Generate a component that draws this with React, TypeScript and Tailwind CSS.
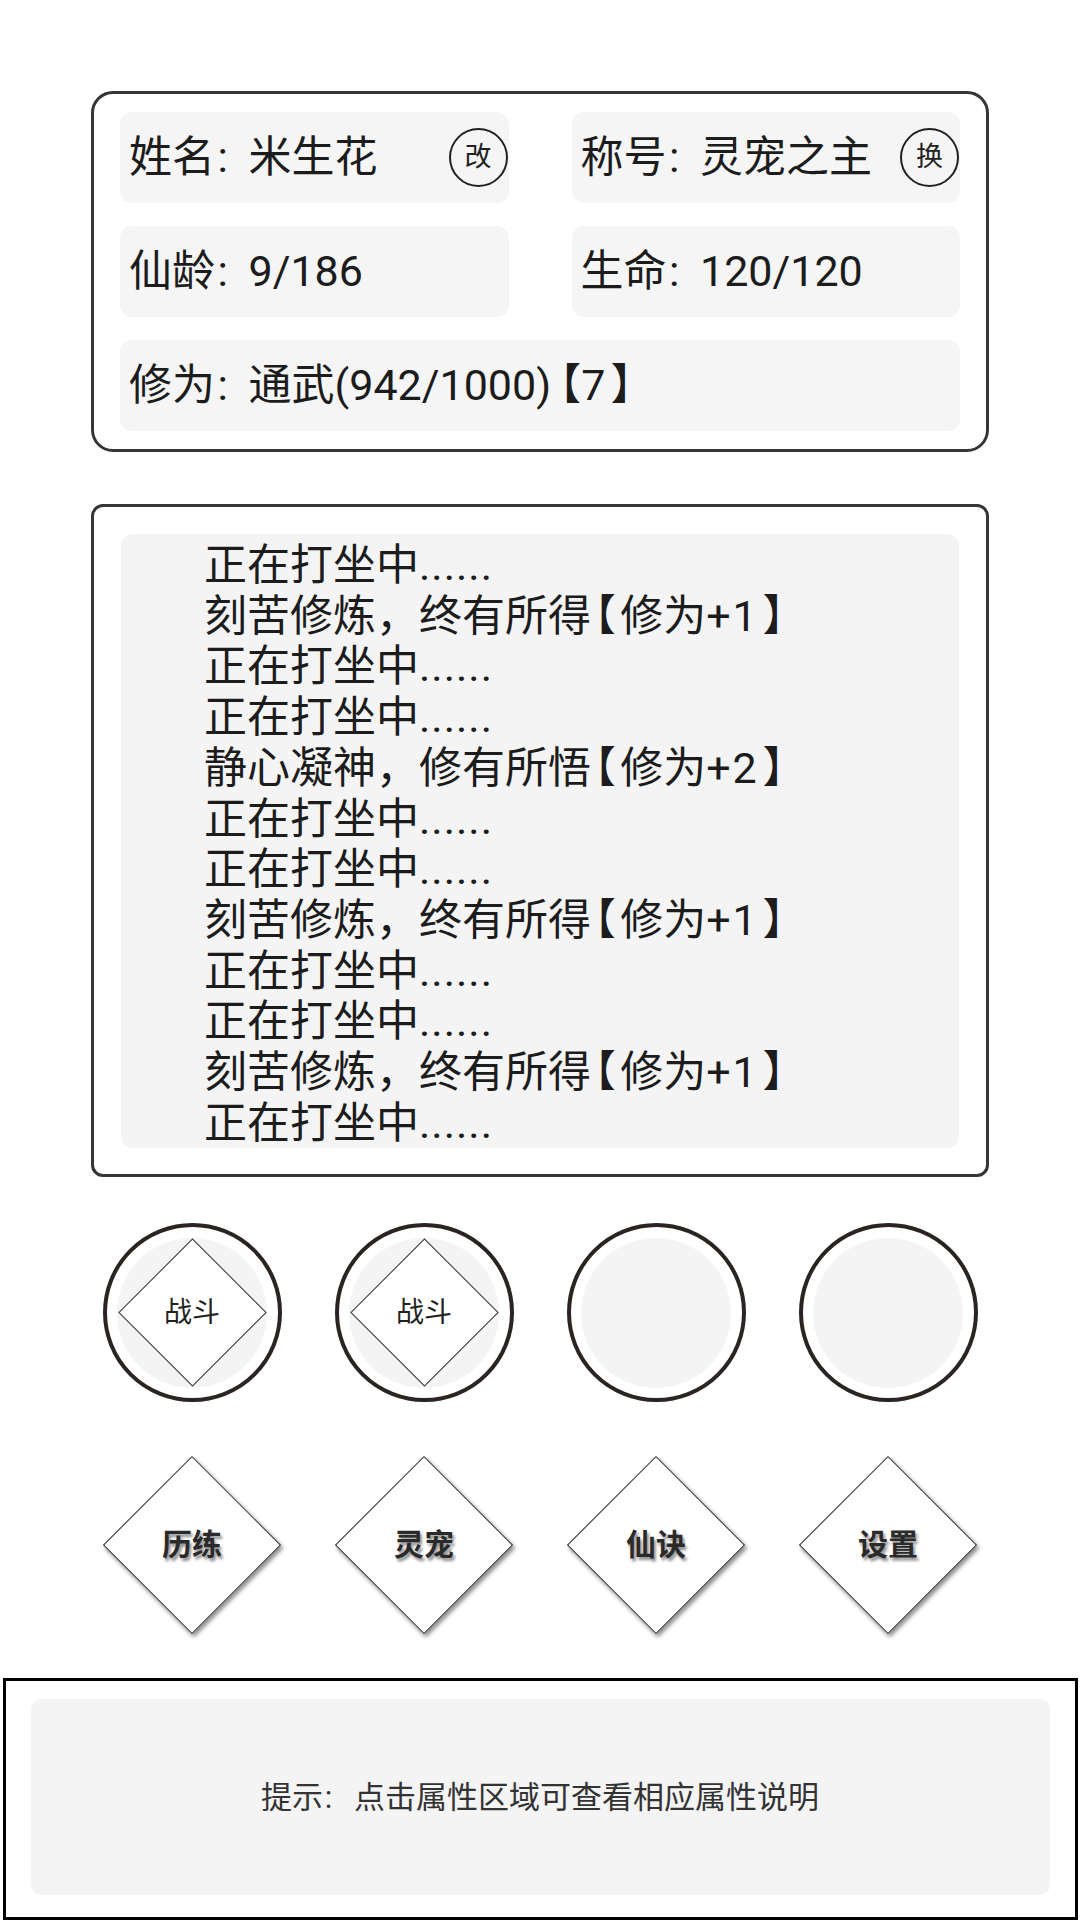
import React from "react";

const FONT = { fontFamily: "Roboto, 'Noto Sans CJK SC', 'Noto Sans', sans-serif" };

function Colon({ w = "w-[0.78em]" }: { w?: string }) {
  return <span className={`inline-block ${w} pl-[0.06em]`}>:</span>;
}

function InfoCell({ children, btn, full }: { children: React.ReactNode; btn?: string; full?: boolean }) {
  return (
    <div
      className={`h-[91px] rounded-[12px] bg-[#f5f5f5] flex items-center justify-between pl-[9px] ${
        full ? "col-span-2" : ""
      }`}
    >
      <span className="text-[43px] leading-none text-[#1c1c1c] whitespace-nowrap">{children}</span>
      {btn && (
        <div className="w-[59px] h-[59px] mr-[1px] rounded-full border-2 border-[#222] flex items-center justify-center text-[27px] leading-none text-[#222]">
          {btn}
        </div>
      )}
    </div>
  );
}

type Log = { a: string; last?: string; b?: string };
const P: Log = { a: "正在打坐中" };
const K: Log = { a: "刻苦修炼，终有所", last: "得", b: "修为" };
const J: Log = { a: "静心凝神，修有所", last: "悟", b: "修为" };
const LOGS: { l: Log; n?: string }[] = [
  { l: P },
  { l: K, n: "+1" },
  { l: P },
  { l: P },
  { l: J, n: "+2" },
  { l: P },
  { l: P },
  { l: K, n: "+1" },
  { l: P },
  { l: P },
  { l: K, n: "+1" },
  { l: P },
];

function CircleSlot({ label }: { label?: string }) {
  return (
    <div className="w-[179px] h-[179px] rounded-full border-[4px] border-[#2a2522] flex items-center justify-center">
      <div className="w-[150px] h-[150px] rounded-full bg-[#f4f4f4] grid place-items-center">
        {label && (
          <>
            <div className="col-start-1 row-start-1 w-[105px] h-[105px] rotate-45 border-[1.5px] border-[#333] bg-white" />
            <span className="relative col-start-1 row-start-1 text-[28px] leading-none text-[#222]">{label}</span>
          </>
        )}
      </div>
    </div>
  );
}

function DiamondBtn({ label }: { label: string }) {
  return (
    <div className="w-[179px] h-[178px] grid place-items-center">
      <div className="col-start-1 row-start-1 w-[178px] h-[178px] grid place-items-center drop-shadow-[2px_3px_2px_rgba(0,0,0,0.45)]">
        <div className="w-[126px] h-[126px] rotate-45 border-[1.5px] border-[#2a2a2a] bg-white" />
      </div>
      <span className="relative col-start-1 row-start-1 text-[30px] font-bold leading-none text-[#2a2a2a] [text-shadow:2px_3px_3px_rgba(0,0,0,0.45)]">
        {label}
      </span>
    </div>
  );
}

export default function App() {
  return (
    <div className="w-[1080px] h-[1920px] bg-white flex flex-col items-center overflow-hidden" style={FONT}>
      <div className="mt-[91px] w-[898px] border-[3px] border-[#363636] rounded-[22px] px-[26px] py-[18px] grid grid-cols-2 gap-x-[63px] gap-y-[23px]">
        <InfoCell btn="改">
          姓名
          <Colon />
          米生花
        </InfoCell>
        <InfoCell btn="换">
          称号
          <Colon />
          灵宠之主
        </InfoCell>
        <InfoCell>
          仙龄
          <Colon />
          9/186
        </InfoCell>
        <InfoCell>
          生命
          <Colon />
          120/120
        </InfoCell>
        <InfoCell full>
          修为
          <Colon />
          通武(942/1000
          <span className="tracking-[-0.3em]">)</span>
          <span>【</span>7<span className="ml-[0.12em]">】</span>
        </InfoCell>
      </div>

      <div className="mt-[52px] w-[898px] h-[673px] border-[3px] border-[#363636] rounded-[12px] px-[27px] pt-[27px] pb-[26px]">
        <div className="h-full rounded-[12px] bg-[#f4f4f4] pl-[83px] pt-[6px] overflow-hidden">
          {LOGS.map(({ l, n }, i) => (
            <div key={i} className="text-[43px] leading-[50.7px] text-[#1c1c1c] whitespace-nowrap">
              {l.a}
              {l.last ? (
                <>
                  <span className="tracking-[-0.42em]">{l.last}</span>
                  <span className="tracking-[0.1em]">【</span>
                  {l.b}
                  <span className="tracking-[0.04em]">{n}</span>
                  <span className="ml-[0.1em]">】</span>
                </>
              ) : (
                <span className="tracking-[1px]">......</span>
              )}
            </div>
          ))}
        </div>
      </div>

      <div className="mt-[46px] flex gap-[53px]">
        <CircleSlot label="战斗" />
        <CircleSlot label="战斗" />
        <CircleSlot />
        <CircleSlot />
      </div>

      <div className="mt-[54px] flex gap-[53px]">
        <DiamondBtn label="历练" />
        <DiamondBtn label="灵宠" />
        <DiamondBtn label="仙诀" />
        <DiamondBtn label="设置" />
      </div>

      <div className="mt-[44px] w-[1075px] h-[243px] border-[3px] border-black px-[25px] pt-[18px] pb-[22px]">
        <div className="h-full rounded-[10px] bg-[#f4f4f4] flex items-center justify-center">
          <span className="text-[31px] leading-none text-[#333]">
            提示
            <Colon w="w-[1em]" />
            点击属性区域可查看相应属性说明
          </span>
        </div>
      </div>
    </div>
  );
}
